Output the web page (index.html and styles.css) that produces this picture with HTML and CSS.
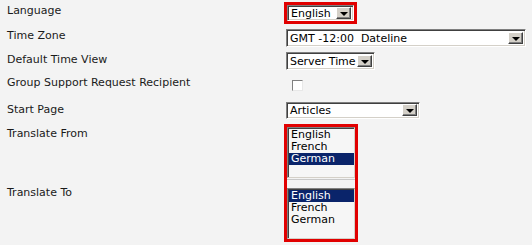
FILE: index.html
```html
<!DOCTYPE html>
<html lang="en">
<head>
    <meta charset="UTF-8">
    <title>Preferences</title>
    <link rel="stylesheet" href="styles.css">
</head>
<body>
    <div class="form">
        <div class="row row-lang">
            <div class="label">Language</div>
            <div class="field">
                <div class="mark mark-lang">
                    <div class="select sel-lang"><span class="value">English</span><span class="btn"></span></div>
                </div>
            </div>
        </div>
        <div class="row row-zone">
            <div class="label">Time Zone</div>
            <div class="field">
                <div class="select sel-zone"><span class="value">GMT -12:00&nbsp;&nbsp;Dateline</span><span class="btn"></span></div>
            </div>
        </div>
        <div class="row row-view">
            <div class="label">Default Time View</div>
            <div class="field">
                <div class="select sel-view"><span class="value">Server Time</span><span class="btn"></span></div>
            </div>
        </div>
        <div class="row row-check">
            <div class="label">Group Support Request Recipient</div>
            <div class="field">
                <div class="checkbox"></div>
            </div>
        </div>
        <div class="row row-start">
            <div class="label">Start Page</div>
            <div class="field">
                <div class="select sel-start"><span class="value">Articles</span><span class="btn"></span></div>
            </div>
        </div>
        <div class="row row-translate">
            <div class="label-stack">
                <div class="label label-from">Translate From</div>
                <div class="label label-to">Translate To</div>
            </div>
            <div class="field">
                <div class="mark mark-translate">
                    <div class="listbox">
                        <div class="option">English</div>
                        <div class="option">French</div>
                        <div class="option selected">German</div>
                    </div>
                    <div class="divider"></div>
                    <div class="listbox">
                        <div class="option selected">English</div>
                        <div class="option">French</div>
                        <div class="option">German</div>
                    </div>
                </div>
            </div>
        </div>
    </div>
</body>
</html>
```

FILE: styles.css
```css
body {
    margin: 0;
    background: #f3f3f3;
    font-family: 'DejaVu Sans', Verdana, sans-serif;
    font-size: 11px;
    color: #1a1a1a;
}

.form {
    padding-left: 7px;
}

.row {
    display: flex;
}

.label,
.label-stack {
    width: 277px;
    flex: none;
    line-height: 13px;
}

.field {
    flex: 1;
}

/* row heights */
.row-lang { height: 26px; }
.row-zone { height: 24px; }
.row-view { height: 23px; }
.row-check { height: 23px; }
.row-start { height: 26px; }

.row-lang .label { padding-top: 4px; }
.row-zone .label { padding-top: 3px; }
.row-view .label { padding-top: 3px; }
.row-check .label { padding-top: 3px; }
.row-start .label { padding-top: 7px; }

.label-from { padding-top: 5px; }
.label-to { margin-top: 46px; }

/* red highlight frame */
.mark {
    border: 3px solid #e10000;
    box-sizing: border-box;
}

.mark-lang {
    width: 73px;
    height: 22px;
    margin-top: 2px;
}

.mark-translate {
    width: 74px;
    height: 118px;
    margin-top: 2px;
}

/* dropdowns */
.select {
    display: flex;
    box-sizing: border-box;
    height: 18px;
    background: #fff;
    color: #000;
    border: 1px solid;
    border-color: #7f7f7f #ffffff #ffffff #7f7f7f;
    box-shadow: inset 1px 1px 0 #404040, inset -1px -1px 0 #d4d0c8;
    padding: 2px;
    margin-left: 2px;
}

.select .value {
    flex: 1;
    line-height: 13px;
    padding-left: 1px;
    white-space: nowrap;
    overflow: hidden;
}

.select .btn {
    flex: none;
    width: 15px;
    box-sizing: border-box;
    background: #d4d0c8;
    border: 1px solid;
    border-color: #ffffff #404040 #404040 #ffffff;
    box-shadow: inset -1px -1px 0 #808080;
    display: flex;
    align-items: center;
    justify-content: center;
}

.select .btn::after {
    content: '';
    border-left: 4px solid transparent;
    border-right: 4px solid transparent;
    border-top: 4px solid #000;
    margin-top: 1px;
}

.sel-lang {
    height: 16px;
    margin: 0;
    padding: 1px 2px 1px 2px;
}

.sel-zone {
    width: 240px;
    margin-top: 3px;
}

.sel-view {
    width: 89px;
    margin-top: 2px;
    letter-spacing: -0.1px;
}

.sel-start {
    width: 134px;
    height: 17px;
    margin-top: 6px;
    padding: 1px 2px 2px 2px;
}

/* checkbox */
.checkbox {
    width: 11px;
    height: 11px;
    box-sizing: border-box;
    margin: 7px 0 0 8px;
    background: #fff;
    border: 1px solid;
    border-color: #808080 #e8e8e8 #e8e8e8 #808080;
}

/* list boxes */
.listbox {
    height: 51px;
    box-sizing: border-box;
    background: #f6f6f6;
    border: 1px solid;
    border-color: #7f7f7f #d4d0c8 #d4d0c8 #7f7f7f;
    box-shadow: inset 1px 1px 0 #404040;
    padding: 1px 0 0 1px;
}

.option {
    height: 12px;
    line-height: 12px;
    font-size: 11px;
    color: #000;
    padding-left: 2px;
    white-space: nowrap;
}

.option.selected {
    background: #0a246a;
    color: #fff;
}

.divider {
    height: 9px;
    border-top: 1px solid #c8c8c8;
    margin-top: 1px;
    box-sizing: border-box;
}
```
